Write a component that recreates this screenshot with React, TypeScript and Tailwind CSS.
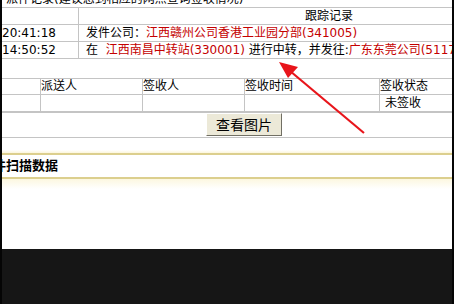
const FONT = { fontFamily: '"DejaVu Sans", "Noto Sans CJK SC", sans-serif' };

function Arrow() {
  return (
    <svg className="absolute left-0 top-0" width="454" height="304" viewBox="0 0 454 304">
      <line x1="362" y1="133" x2="288" y2="71" stroke="#e8151b" strokeWidth="2.2" />
      <polygon points="277,62 296,67 286,78" fill="#e8151b" />
    </svg>
  );
}

export default function App() {
  return (
    <div className="relative w-[454px] h-[304px] bg-[#161616] border-x-2 border-[#050505] overflow-hidden text-[12px] text-black" style={FONT}>
      <div className="h-[249px] bg-white flex flex-col">
        {/* tracking table */}
        <div className="h-[8px] border-b border-[#c4c4c4] overflow-hidden">
          <div className="-mt-[8px] pl-[4px] leading-[14px] whitespace-nowrap">派件记录(建议您到相应的网点查询签收情况)</div>
        </div>
        <div className="h-[17px] flex border-b border-[#c4c4c4] leading-[16px]">
          <div className="w-[77px] border-r border-[#c4c4c4]" />
          <div className="flex-1 pl-[226px]">跟踪记录</div>
        </div>
        <div className="h-[17px] flex border-b border-[#c4c4c4] leading-[16px] whitespace-nowrap">
          <div className="w-[77px] border-r border-[#c4c4c4]">20:41:18</div>
          <div className="flex-1 pl-[7px]">
            发件公司：<span className="text-[#c40000]">江西赣州公司香港工业园分部(341005)</span>
          </div>
        </div>
        <div className="h-[17px] flex border-b border-[#c4c4c4] leading-[16px] whitespace-nowrap overflow-hidden">
          <div className="w-[77px] shrink-0 border-r border-[#c4c4c4]">14:50:52</div>
          <div className="flex-1 pl-[7px]">
            在&nbsp;&nbsp;<span className="text-[#c40000]">江西南昌中转站(330001)</span> 进行中转，并发往:<span className="text-[#c40000]">广东东莞公司(511700)</span>
          </div>
        </div>

        {/* delivery table */}
        <div className="mt-[19px] h-[17px] flex border-y border-[#c4c4c4] leading-[15px] whitespace-nowrap">
          <div className="w-[39px] border-r border-[#c4c4c4]" />
          <div className="w-[102px] border-r border-[#c4c4c4]">派送人</div>
          <div className="w-[102px] border-r border-[#c4c4c4]">签收人</div>
          <div className="w-[135px] border-r border-[#c4c4c4]">签收时间</div>
          <div className="flex-1">签收状态</div>
        </div>
        <div className="h-[17px] flex border-b border-[#c4c4c4] leading-[16px] whitespace-nowrap">
          <div className="w-[39px] border-r border-[#c4c4c4]" />
          <div className="w-[102px] border-r border-[#c4c4c4]" />
          <div className="w-[102px] border-r border-[#c4c4c4]" />
          <div className="w-[135px] border-r border-[#c4c4c4]" />
          <div className="flex-1 pl-[5px]">未签收</div>
        </div>
        <div className="h-[26px] flex items-start border-y border-[#c4c4c4] pl-[204px]">
          <button className="w-[76px] h-[23px] bg-[#ece9d8] border border-t-white border-l-white border-r-[#716f64] border-b-[#716f64] text-[14px] leading-[20px]">
            查看图片
          </button>
        </div>

        {/* scan data */}
        <div className="mt-[12px] h-[3px] bg-gradient-to-b from-white to-[#fcf6dc]" />
        <div className="h-[26px] border-t-2 border-b-2 border-t-[#dccf8e] border-b-[#dccf8e] flex items-center overflow-hidden">
          <span className="-ml-[9px] font-bold text-[13px] whitespace-nowrap">件扫描数据</span>
        </div>
        <div className="h-[10px] bg-gradient-to-b from-[#fcf7e0] to-white" />
      </div>
      <Arrow />
    </div>
  );
}
